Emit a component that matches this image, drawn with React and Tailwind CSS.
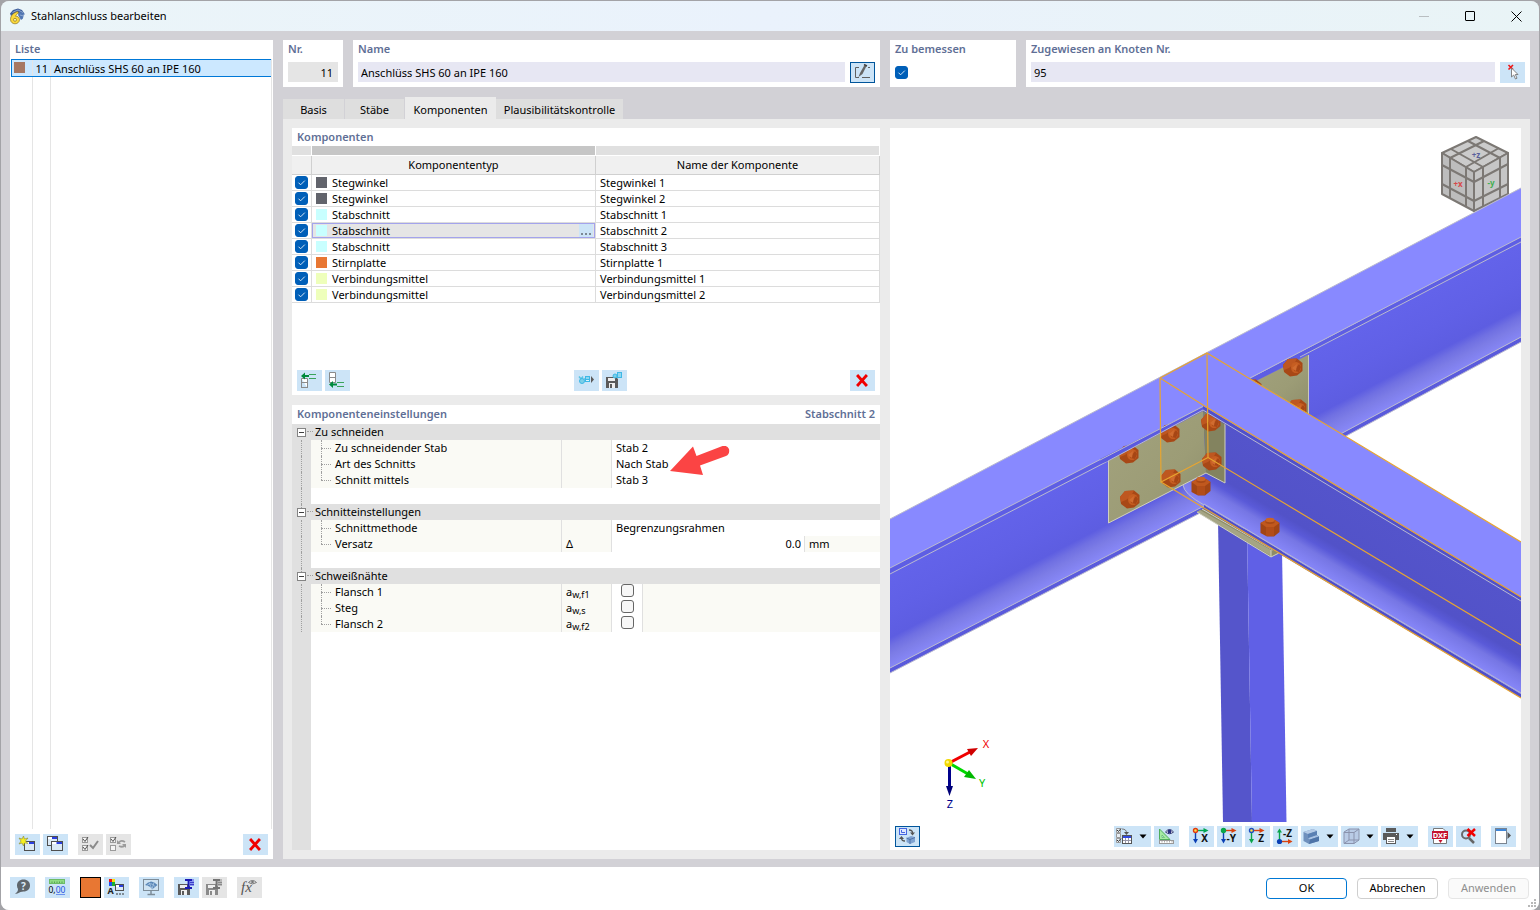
import { useState } from "react";
import clsx from "clsx";

const COMPONENTS = [
  { id: 1, type: "Stegwinkel", name: "Stegwinkel 1", color: "bg-[#62646c]" },
  { id: 2, type: "Stegwinkel", name: "Stegwinkel 2", color: "bg-[#62646c]" },
  { id: 3, type: "Stabschnitt", name: "Stabschnitt 1", color: "bg-[#c8ffff]" },
  { id: 4, type: "Stabschnitt", name: "Stabschnitt 2", color: "bg-[#c8ffff]" },
  { id: 5, type: "Stabschnitt", name: "Stabschnitt 3", color: "bg-[#c8ffff]" },
  { id: 6, type: "Stirnplatte", name: "Stirnplatte 1", color: "bg-[#e87733]" },
  { id: 7, type: "Verbindungsmittel", name: "Verbindungsmittel 1", color: "bg-[#eeffbb]" },
  { id: 8, type: "Verbindungsmittel", name: "Verbindungsmittel 2", color: "bg-[#eeffbb]" },
];

const SETTINGS = [
  {
    title: "Zu schneiden",
    rows: [
      { label: "Zu schneidender Stab", value: "Stab 2" },
      { label: "Art des Schnitts", value: "Nach Stab" },
      { label: "Schnitt mittels", value: "Stab 3" },
    ],
  },
  {
    title: "Schnitteinstellungen",
    rows: [
      { label: "Schnittmethode", value: "Begrenzungsrahmen" },
      { label: "Versatz", symbol: "Δ", number: "0.0", unit: "mm" },
    ],
  },
  {
    title: "Schweißnähte",
    rows: [
      { label: "Flansch 1", symbol: "a", sub: "w,f1", check: true },
      { label: "Steg", symbol: "a", sub: "w,s", check: true },
      { label: "Flansch 2", symbol: "a", sub: "w,f2", check: true },
    ],
  },
];

const TABS = [
  { name: "Basis", width: "w-[62px]" },
  { name: "Stäbe", width: "w-[60px]" },
  { name: "Komponenten", width: "w-[91px]" },
  { name: "Plausibilitätskontrolle", width: "w-[128px]" },
];

const Icon = ({ children }) => (
  <svg width="25" height="21" viewBox="0 0 25 21" className="shrink-0" aria-hidden="true">
    {children}
  </svg>
);

const ToolButton = ({ label, disabled, active, menu, children }) => (
  <button
    type="button"
    aria-label={label}
    disabled={disabled}
    className={clsx(
      "flex h-[21px] shrink-0 items-center overflow-hidden",
      menu ? "w-[37px]" : "w-[25px] justify-center",
      disabled ? "bg-[#e5e5e5]" : "bg-[#cce4f7]",
      active && "outline outline-1 -outline-offset-1 outline-[#00559b]"
    )}
  >
    <Icon>{children}</Icon>
    {menu && (
      <svg width="8" height="5" viewBox="0 0 8 5" className="shrink-0" aria-hidden="true">
        <path d="M0.5 0.5H7.5L4 4.5Z" fill="#000" />
      </svg>
    )}
  </button>
);

const Checkbox = ({ label, checked, onChange }) => (
  <label className="relative block size-[13px]">
    <input
      type="checkbox"
      aria-label={label}
      checked={checked}
      onChange={onChange}
      className="block size-[13px] appearance-none rounded-[3px] border border-[#666] bg-[#f7f7f7] checked:border-[#005fb8] checked:bg-[#005fb8]"
    />
    {checked && (
      <svg width="13" height="13" viewBox="0 0 13 13" className="pointer-events-none absolute inset-0">
        <path d="M3.5 6.7L5.6 8.8L9.8 4.6" fill="none" stroke="#d6e6f5" />
      </svg>
    )}
  </label>
);

const Heading = ({ children }) => (
  <h2 className="text-[11px] leading-[18px] font-semibold text-[#5f6f96]">{children}</h2>
);

/* ---------- icon drawings, all on a 25 x 21 canvas ---------- */

const RedCross = () => (
  <path d="M8 6L16 15M16 6L8 15" stroke="#f00000" strokeWidth="2.8" strokeLinecap="square" />
);

const MiniWindow = ({ x, y, w = 10, h = 9 }) => (
  <g>
    <rect x={x + 0.5} y={y + 0.5} width={w} height={h} fill="#dbe9f5" stroke="#4f4f4f" />
    <rect x={x + 1} y={y + 1} width={w - 1} height="2" fill="#fff" />
    <rect x={x + w / 2} y={y + 1} width={w / 2} height="2" fill="#2a3fe0" />
  </g>
);

const CheckBoxes = ({ both }) => (
  <g fill="none">
    <rect x="4.5" y="3.5" width="5" height="5" fill="#f4f4f4" stroke="#9a9a9a" />
    <rect x="4.5" y="11.5" width="5" height="5" fill="#f4f4f4" stroke="#9a9a9a" />
    <path d="M5 5l2 2.500l3-4.500" stroke="#4f4f4f" />
    {both && <path d="M5 13l2 2.500l3-4.500" stroke="#4f4f4f" />}
  </g>
);

const Disk = ({ color }) => (
  <g>
    <path d="M4 7H14L16 9V18H4Z" fill={color} />
    <rect x="6" y="8" width="7" height="3" fill="#eee" />
    <rect x="7" y="13" width="6" height="5" fill="#eee" />
    <rect x="8" y="14" width="2" height="4" fill={color} />
  </g>
);

const AxisIcon = ({ dot, ring, right, down, text, flip }) => (
  <g strokeWidth="1.400" fill="none">
    {flip ? (
      <>
        <path d="M6.500 15V5" stroke={down} />
        <path d="M4 6.500L6.500 2.500L9 6.500Z" fill={down} />
        <path d="M6.500 15.500H16" stroke={right} />
        <path d="M15 13L19.500 15.500L15 18Z" fill={right} />
        <circle cx="6.500" cy="15.500" r="2.600" fill={dot} />
      </>
    ) : (
      <>
        <path d="M6.500 5V14" stroke={down} />
        <path d="M4 13L6.500 17.500L9 13Z" fill={down} />
        <path d="M6.500 4.500H16" stroke={right} />
        <path d="M14.500 2L19.500 4.500L14.500 7Z" fill={right} />
        <circle cx="6.500" cy="4.500" r="2" fill={dot} stroke={ring} />
      </>
    )}
    <text
      x={19}
      y={flip ? 11 : 16}
      fontSize="10"
      fontWeight="700"
      fill="#111"
      textAnchor="end"
      fontFamily="Noto Sans, sans-serif"
    >
      {text}
    </text>
  </g>
);

const AppLogo = () => (
  <svg width="17" height="17" viewBox="0 0 17 17" aria-hidden="true">
    <path d="M1 5.500L4 2L9 0.500L13 2L16 6.500L13 6L12 9L9 5L4 6.500L2 8Z" fill="#3f5f9c" />
    <path d="M10 4L15 5L14 10.500L12 12L9 7Z" fill="#5277b4" />
    <path d="M3.500 4.500L9 2L14 4.500M11 7L14.500 8" stroke="#8fa9d2" fill="none" />
    <path d="M8.500 3.500C4 5 1.500 8 1.500 11.500C1.500 14 3.500 15.800 6 15.800S10.500 14 10.500 11.600S8.500 8 6.500 8.200C7 7 7.800 6 9.500 5Z" fill="#fbd83a" stroke="#8a7420" strokeWidth="0.700" />
    <circle cx="6" cy="11.800" r="1.500" fill="#fff2a8" stroke="#8a7420" strokeWidth="0.700" />
  </svg>
);

const BeamTag = ({ dark, light }) => (
  <g>
    <rect x="14" y="2" width="6" height="7" fill={light} />
    <path d="M11 3H18M11 11H18M14.500 3V11" stroke={dark} strokeWidth="1.800" />
    <path d="M16 5.500H20M16 7.500H20" stroke={dark} strokeWidth="0.700" />
  </g>
);

/* ---------- 3D view ---------- */

const Bolt = ({ x, y }) => (
  <g transform={`translate(${x} ${y})`}>
    <path d="M-10 -2L-5 -8L4 -8.500L9.500 -4L9.500 4L4 8.500L-3 9.500L-9 5Z" fill="#a84816" />
    <path d="M-10 -2L-5 -8L4 -8.500L1 -3L-4 1L-9 3Z" fill="#be5720" />
    <ellipse cx="3" cy="0.500" rx="5" ry="5.500" fill="#c65e22" />
    <path d="M1 4L6 5L8 0L6 -3Z" fill="#a64615" />
    <path d="M-1 1L3 4L4 -3Z" fill="#d06c30" />
  </g>
);

const Nut = ({ x, y }) => (
  <g transform={`translate(${x} ${y})`}>
    <path d="M-9.500 -4L-4 -7L5 -7L9.500 -4V5L4 9.500H-3L-9.500 6Z" fill="#a24514" />
    <path d="M-9.500 -4L-4 -7L5 -7L9.500 -4L4 0L-4 0Z" fill="#c0581e" />
    <path d="M-4 0H4V9H-4Z" fill="#b24d19" />
    <path d="M-4.500 -7V-4Q0 -2 4.500 -4V-7Z" fill="#a84816" />
    <ellipse cx="0" cy="-7" rx="4.500" ry="2.200" fill="#c96427" />
  </g>
);

const NavigationCube = () => (
  <g stroke="#7c7874" strokeWidth="2" strokeLinejoin="round">
    <path d="M1476 137L1508 153L1474 172L1442 153Z" fill="#cbcbcb" />
    <path d="M1442 153L1474 172V211L1442 194Z" fill="#bdbdbd" />
    <path d="M1474 172L1508 153V194L1474 211Z" fill="#c6c6c6" />
    <g fill="none">
      <path d="M1468 141L1500 158V198M1451 149L1483 167V206" />
      <path d="M1484 141L1450 158V198M1499 148L1466 167V207" />
      <path d="M1442 165L1474 182L1508 164M1442 184L1474 201L1508 184" />
    </g>
    <g stroke="none" fontSize="8" fontWeight="700" fontFamily="Noto Sans, sans-serif" textAnchor="middle">
      <text x="1476" y="158" fill="#5b5f9c">+z</text>
      <text x="1458" y="187" fill="#d84a4a">+x</text>
      <text x="1491" y="186" fill="#3fae50">-y</text>
    </g>
  </g>
);

const AxisCross = () => (
  <g fontSize="11" fontFamily="Noto Sans, sans-serif" textAnchor="middle">
    <path d="M949 763L970 752" stroke="#f00000" strokeWidth="3" />
    <path d="M967 749L978 748L971 756Z" fill="#d00000" />
    <path d="M949 763L968 774" stroke="#00d800" strokeWidth="3" />
    <path d="M969 770L976 779L964 777Z" fill="#00b800" />
    <path d="M949.500 763V788" stroke="#00008c" strokeWidth="3" />
    <path d="M946 786H953L949.500 796Z" fill="#000078" />
    <circle cx="948.500" cy="763" r="4" fill="#f2d800" />
    <circle cx="947.500" cy="762" r="1.500" fill="#fff78a" />
    <text x="986" y="748" fill="#f00000">X</text>
    <text x="982" y="787" fill="#00c400">Y</text>
    <text x="950" y="808" fill="#00008c">Z</text>
  </g>
);

const JointView = () => (
  <svg
    viewBox="890 128 631 694"
    preserveAspectRatio="xMidYMid slice"
    className="min-h-0 w-full flex-1"
    role="img"
    aria-label="3D-Ansicht"
  >
    <defs>
      <linearGradient id="webA" gradientUnits="userSpaceOnUse" x1="890" y1="574" x2="928.600" y2="647.800">
        <stop offset="0" stopColor="#6363ea" />
        <stop offset="0.4" stopColor="#6060e6" />
        <stop offset="0.68" stopColor="#5d5de1" />
        <stop offset="0.77" stopColor="#7070e2" />
        <stop offset="0.86" stopColor="#7c7ce6" />
        <stop offset="1" stopColor="#8787f6" />
      </linearGradient>
      <linearGradient id="webB" gradientUnits="userSpaceOnUse" x1="1521" y1="600" x2="1479.600" y2="669.600">
        <stop offset="0" stopColor="#5454cb" />
        <stop offset="0.6" stopColor="#5252c8" />
        <stop offset="0.7" stopColor="#5a5ad8" />
        <stop offset="0.8" stopColor="#7676e4" />
        <stop offset="1" stopColor="#8888fa" />
      </linearGradient>
      <linearGradient id="plate" x1="0" y1="0" x2="1" y2="1">
        <stop offset="0" stopColor="#a3a37e" />
        <stop offset="0.6" stopColor="#9c9c76" />
        <stop offset="1" stopColor="#8d8d6b" />
      </linearGradient>
    </defs>

    <NavigationCube />

    {/* main beam */}
    <path d="M890 568L1203 406L1250 379L1521 237V337L1320 445L1204 507L890 668Z" fill="url(#webA)" />
    <path d="M1204 507L1320 445L1343 440L1300 520L1206 512Z" fill="#fff" />
    <path d="M890 668L1204 506V511L890 673Z" fill="#5a5adc" />
    <path d="M1320 445L1521 337V342L1320 450Z" fill="#5a5adc" />
    <path d="M890 668L1204 506M1320 445L1521 337M890 673L1204 511M1320 450L1521 342" stroke="#b9b9cf" fill="none" />
    <path d="M890 519L1207 352.500L1521 188V237L1250 378.500L1203 406.500L890 568Z" fill="#8889ff" />
    <path d="M890 568L1203 406.500V411L890 573Z M1250 378.500L1521 237V241L1250 384Z" fill="#5e5ee4" />
    <path d="M890 519L1207 352.500L1521 188M890 568L1203 406.500M890 574L1108 461M1250 378L1521 237M1300 357L1521 242" stroke="#b9b9cf" fill="none" />

    {/* far web angle */}
    <path d="M1252 383L1308 355V416L1240 400Z" fill="url(#plate)" />
    <path d="M1308.500 355V416" stroke="#c9c9bd" />
    <Bolt x={1293} y={367} />
    <Bolt x={1297} y={408} />
    <Bolt x={1252} y={388} />

    {/* column */}
    <path d="M1218 520L1247 530L1252 822H1223Z" fill="#5555cb" />
    <path d="M1247 530L1282 550L1286.500 822H1252Z" fill="#6060e6" />

    {/* end plate */}
    <path d="M1197 512L1205 508L1280 549V553L1271 557Z" fill="#8c8c68" />
    <path d="M1200 510L1271 550V556L1197 512Z" fill="#a5a584" />
    <path d="M1202 509L1273 550M1271 550V557M1197 512L1271 557L1279 553" stroke="#d2d2c2" fill="none" />

    {/* secondary beam */}
    <path d="M1183 485L1206 472L1204 407L1521 597V694L1204 505Q1184 495 1183 485Z" fill="url(#webB)" />
    <path d="M1183 485Q1184 494 1204 505" stroke="#b9b9cf" fill="none" />
    <path d="M1204 505L1521 694V698L1204 509Z" fill="#4e4ec8" />
    <path d="M1204 504L1521 693" stroke="#b9b9cf" fill="none" />

    {/* near web angle */}
    <path d="M1108 459L1203 408L1206 473L1109 523Z" fill="url(#plate)" />
    <path d="M1203 408L1225 423V483L1206 473Z" fill="#83835f" />
    <path d="M1108.500 459V523L1206 473L1225 483V422" stroke="#cfcfc0" fill="none" />
    <Bolt x={1129} y={454} />
    <Bolt x={1170} y={433} />
    <Bolt x={1211} y={422} />
    <Bolt x={1130} y={499} />
    <Bolt x={1171} y={478} />
    <Bolt x={1212} y={461} />
    <Nut x={1201} y={486} />
    <Nut x={1270} y={527} />

    {/* top flanges over the angle */}
    <path d="M1100 459L1203 406.500V411L1108 461L1100 464Z" fill="#5a5ae0" />
    <path d="M1160 378L1207 353L1521 542V597L1203 407Z" fill="#8889ff" />
    <path d="M1203 406L1521 597V601L1203 411Z" fill="#5050cc" />
    <path d="M1100 460L1203 406.500M1108 461L1203 410L1521 601" stroke="#b9b9cf" fill="none" />

    {/* bounding box of the cut */}
    <path
      d="M1160 378L1207 353L1521 542M1160 378L1203 405L1521 597M1207 353L1208 457.500L1521 645M1160 378L1161 482L1208 457.500M1161 482L1204 508L1521 698"
      stroke="#e8a530"
      strokeWidth="1.200"
      fill="none"
    />

    <AxisCross />
  </svg>
);

/* ---------- panels ---------- */

const TitleBar = () => (
  <header className="flex h-[30px] items-center bg-linear-to-r from-[#ebf5f8] via-[#eaf2fc] to-[#e9f4f6] pl-2">
    <AppLogo />
    <h1 className="ml-[5px] flex-1">Stahlanschluss bearbeiten</h1>
    <button type="button" aria-label="Minimieren" className="grid h-full w-[46px] place-items-center">
      <span className="h-px w-[10px] bg-[#b9bec1]" />
    </button>
    <button type="button" aria-label="Maximieren" className="grid h-full w-[46px] place-items-center">
      <span className="size-[10px] rounded-[1px] border border-black" />
    </button>
    <button type="button" aria-label="Schließen" className="grid h-full w-[46px] place-items-center">
      <svg width="11" height="11" viewBox="0 0 11 11">
        <path d="M0.500 0.500L10.500 10.500M10.500 0.500L0.500 10.500" stroke="#000" />
      </svg>
    </button>
  </header>
);

const ListPanel = () => (
  <aside className="flex w-[263px] shrink-0 flex-col bg-white">
    <div className="h-[19px] pl-[5px]">
      <Heading>Liste</Heading>
    </div>
    <div className="mr-[1px] ml-[1px] flex flex-1 flex-col border-r border-[#e5e5e5]">
      <button
        type="button"
        className="grid h-[18px] grid-cols-[21px_18px_1fr] items-stretch border border-r-0 border-[#0078d7] bg-[#cce8ff] text-left leading-[18px]"
      >
        <span className="border-r border-[#e5e5e5] pt-[2px] pl-[2px]">
          <span className="block size-[11px] bg-[#a67864]" />
        </span>
        <span className="h-4 border-r border-[#e5e5e5] pr-[2px] text-right">11</span>
        <span className="h-4 pl-[3px]">Anschlüss SHS 60 an IPE 160</span>
      </button>
      <div className="grid flex-1 grid-cols-[22px_18px_1fr]">
        <span className="border-r border-[#e5e5e5]" />
        <span className="border-r border-[#e5e5e5]" />
      </div>
    </div>
    <div className="mt-[5px] mb-1 flex gap-[3px] px-[5px]">
      <ToolButton label="Neu">
        <MiniWindow x={9} y={7} />
        <path d="M8.500 2L9.500 5L13 4L10.500 7L13 9.500L9.500 9L8.500 12L7 9L4 10L6 7L4 4L7 5Z" fill="#f5ee20" stroke="#8a8a3a" strokeWidth="0.600" />
      </ToolButton>
      <ToolButton label="Kopieren">
        <MiniWindow x={4} y={2} />
        <MiniWindow x={8} y={7} w={11} />
      </ToolButton>
      <span className="w-1" />
      <ToolButton label="Alle auswählen" disabled>
        <CheckBoxes both />
        <path d="M12 11L15 14L20 7" stroke="#8a8a8a" strokeWidth="2" fill="none" />
      </ToolButton>
      <ToolButton label="Auswahl umkehren" disabled>
        <CheckBoxes />
        <path d="M13 8.500Q15 5.500 19 8M19 11Q17 14 13 12" stroke="#9a9a9a" strokeWidth="1.800" fill="none" />
        <path d="M11 6V10H15ZM20 14V10H16Z" fill="#9a9a9a" />
      </ToolButton>
      <span className="flex-1" />
      <ToolButton label="Löschen">
        <RedCross />
      </ToolButton>
    </div>
  </aside>
);

const TopFields = () => {
  const [name, setName] = useState("Anschlüss SHS 60 an IPE 160");
  const [nodes, setNodes] = useState("95");
  const [design, setDesign] = useState(true);

  return (
    <div className="grid grid-cols-[597fr_640fr] gap-[10px]">
      <div className="flex gap-[10px]">
        <label className="block h-[47px] w-[60px] bg-white px-[5px]">
          <Heading>Nr.</Heading>
          <input readOnly value="11" className="mt-1 block h-5 w-full bg-[#e5e5e5] pr-[5px] text-right" />
        </label>
        <div className="h-[47px] flex-1 bg-white px-[5px]">
          <Heading>
            <label htmlFor="name">Name</label>
          </Heading>
          <div className="mt-1 flex gap-[5px]">
            <input
              id="name"
              value={name}
              onChange={(e) => setName(e.target.value)}
              className="h-5 min-w-0 flex-1 bg-[#e7e7f3] px-[3px]"
            />
            <ToolButton label="Name bearbeiten" active>
              <path d="M9 5.500H5.500V15.500H9M12 15.500H20M18 5.500H20" stroke="#606060" fill="none" />
              <path d="M8.500 15L10 11L14.500 3L16.500 4L12.500 12Z" fill="#666" />
              <path d="M14 2.500L17 4" stroke="#444" strokeWidth="1.500" />
            </ToolButton>
          </div>
        </div>
      </div>
      <div className="flex gap-[10px]">
        <div className="h-[47px] w-[126px] bg-white px-[5px]">
          <Heading>Zu bemessen</Heading>
          <div className="mt-2">
            <Checkbox label="Zu bemessen" checked={design} onChange={() => setDesign(!design)} />
          </div>
        </div>
        <div className="h-[47px] flex-1 bg-white px-[5px]">
          <Heading>
            <label htmlFor="nodes">Zugewiesen an Knoten Nr.</label>
          </Heading>
          <div className="mt-1 flex gap-[5px]">
            <input
              id="nodes"
              value={nodes}
              onChange={(e) => setNodes(e.target.value)}
              className="h-5 min-w-0 flex-1 bg-[#e7e7f3] px-[3px]"
            />
            <ToolButton label="Knoten wählen">
              <path d="M8.500 3L13 7.500M13 3L8.500 7.500" stroke="#f01818" strokeWidth="1.600" />
              <path d="M11.500 6V15L13.700 13L15.500 17L17 16.200L15.300 12.500H18Z" fill="#fff" stroke="#777" strokeWidth="0.900" />
            </ToolButton>
          </div>
        </div>
      </div>
    </div>
  );
};

const ComponentsPanel = () => {
  const [selected, setSelected] = useState(4);
  const [disabledIds, setDisabledIds] = useState([]);

  const toggle = (id) => {
    setDisabledIds((ids) => (ids.includes(id) ? ids.filter((i) => i !== id) : [...ids, id]));
  };

  return (
    <section className="flex min-h-[267px] flex-col bg-white">
      <div className="pl-[5px]">
        <Heading>Komponenten</Heading>
      </div>
      <table className="w-full table-fixed border-separate border-spacing-0">
        <colgroup>
          <col className="w-5" />
          <col />
          <col />
        </colgroup>
        <thead>
          <tr className="h-[10px]">
            <td className="border-r border-b border-white bg-[#e0e0e0] p-0" />
            <td className="border-r border-b border-white bg-[#c6c6c6] p-0" />
            <td className="border-r border-b border-white bg-[#e0e0e0] p-0" />
          </tr>
          <tr className="h-[19px] bg-[#f0f0f0]">
            <th className="border-r border-b border-[#d0d0d0] p-0" />
            <th className="border-r border-b border-[#d0d0d0] p-0 leading-[18px] font-normal">Komponententyp</th>
            <th className="border-r border-b border-[#d0d0d0] p-0 leading-[18px] font-normal">Name der Komponente</th>
          </tr>
        </thead>
        <tbody>
          {COMPONENTS.map((item) => (
            <tr key={item.id} className="h-4" onClick={() => setSelected(item.id)}>
              <td className="border-r border-b border-[#dcdcdc] p-0 pl-[3px]">
                <Checkbox
                  label={item.name}
                  checked={!disabledIds.includes(item.id)}
                  onChange={() => toggle(item.id)}
                />
              </td>
              <td className="border-r border-b border-[#dcdcdc] p-0">
                <div
                  className={clsx(
                    "flex h-[15px] items-center pl-1",
                    selected === item.id && "bg-[#e5e5e5] outline outline-1 -outline-offset-1 outline-[#a3a3ec]"
                  )}
                >
                  <span className={clsx("size-[11px]", item.color)} />
                  <span className="ml-[5px] flex-1 leading-[15px]">{item.type}</span>
                  {selected === item.id && (
                    <button
                      type="button"
                      aria-label="Typ wählen"
                      className="mr-[2px] flex h-[13px] w-[14px] items-end justify-center gap-[2px] bg-[#cce4f7] pb-[2px]"
                    >
                      <span className="size-[2px] bg-[#7c8894]" />
                      <span className="size-[2px] bg-[#7c8894]" />
                      <span className="size-[2px] bg-[#7c8894]" />
                    </button>
                  )}
                </div>
              </td>
              <td className="border-r border-b border-[#dcdcdc] p-0 pl-1 leading-[15px]">{item.name}</td>
            </tr>
          ))}
        </tbody>
      </table>
      <div className="mt-auto mb-1 flex justify-between px-[5px]">
        <div className="flex gap-[3px]">
          <ToolButton label="Davor einfügen">
            <path d="M4.500 8.500H10.500V18M4.500 8.500V18M4.500 12.500H10.500M4.500 17.500H10.500" fill="#fff" stroke="#8a8a8a" />
            <path d="M12 4.500H19M12 8.500H19" stroke="#3aa45a" />
            <path d="M4 6L8 2.500V5H12V7H8V9.500Z" fill="#008a3c" />
          </ToolButton>
          <ToolButton label="Danach einfügen">
            <path d="M4.500 2.500H10.500V12.500H4.500ZM4.500 7.500H10.500" fill="#fff" stroke="#8a8a8a" />
            <path d="M12 12.500H19M12 16.500H19" stroke="#3aa45a" />
            <path d="M4 14.500L8 11V13.500H12V15.500H8V18Z" fill="#008a3c" />
          </ToolButton>
        </div>
        <div className="flex gap-[3px]">
          <ToolButton label="Aus Bibliothek">
            <path d="M5 6.500L7 9L9 6.500M9 10L11 8.500" stroke="#5ac4e4" strokeWidth="1.500" fill="none" />
            <circle cx="8" cy="11" r="2.500" fill="#7ccfe8" stroke="#3db8e6" />
            <rect x="11" y="6" width="5" height="6" fill="#3db8e6" />
            <path d="M12 8H15M12 10.500H15" stroke="#dff4fb" />
            <path d="M17 6L20 9.500L17 13Z" fill="#5a5a5a" />
          </ToolButton>
          <ToolButton label="In Bibliothek speichern">
            <Disk color="#5a5a5a" />
            <circle cx="13" cy="6" r="2" fill="#7ccfe8" stroke="#3db8e6" />
            <rect x="15" y="2" width="5" height="6" fill="#3db8e6" />
            <path d="M16 4H19M16 6H19" stroke="#dff4fb" />
          </ToolButton>
        </div>
        <ToolButton label="Komponente löschen">
          <RedCross />
        </ToolButton>
      </div>
    </section>
  );
};

const SettingRow = ({ row, last }) => {
  const [checked, setChecked] = useState(false);
  const [number, setNumber] = useState(row.number);

  return (
    <tr className="h-4 leading-[16px]">
      <td className="relative bg-[#e0e0e0] p-0">
        <span className="absolute top-0 left-[9px] h-full border-l border-dotted border-[#a0a0a0]" />
      </td>
      <td className="relative border-r border-[#e0e0e0] bg-[#fafaf5] p-0 pl-6">
        <span
          className={clsx("absolute top-0 left-[10px] border-l border-dotted border-[#a0a0a0]", last ? "h-2" : "h-full")}
        />
        <span className="absolute top-2 left-[10px] w-[10px] border-t border-dotted border-[#a0a0a0]" />
        {row.label}
      </td>
      <td className="border-r border-[#e0e0e0] bg-[#fafaf5] p-0 pl-1">
        <div className="h-4">
          {row.symbol}
          {row.sub && <span className="relative top-[2px] text-[9px] leading-none">{row.sub}</span>}
        </div>
      </td>
      <td className="p-0">
        {row.check ? (
          <div className="flex h-4">
            <span className="flex w-[31px] justify-center border-r border-[#e0e0e0]">
              <Checkbox label={row.label} checked={checked} onChange={() => setChecked(!checked)} />
            </span>
            <span className="flex-1 bg-[#fafaf5]" />
          </div>
        ) : row.unit ? (
          <div className="flex h-4">
            <input
              aria-label={row.label}
              value={number}
              onChange={(e) => setNumber(e.target.value)}
              className="h-4 min-w-0 flex-1 pr-[3px] text-right"
            />
            <span className="w-[76px] border-l border-[#e0e0e0] bg-[#fafaf5] pl-1">{row.unit}</span>
          </div>
        ) : (
          <span className="pl-1">{row.value}</span>
        )}
      </td>
    </tr>
  );
};

const SettingsPanel = () => (
  <section className="relative flex flex-1 flex-col bg-white">
    <div className="flex justify-between px-[5px] pb-[1px]">
      <Heading>Komponenteneinstellungen</Heading>
      <Heading>Stabschnitt 2</Heading>
    </div>
    <table className="w-full table-fixed border-separate border-spacing-0">
      <colgroup>
        <col className="w-[19px]" />
        <col className="w-[251px]" />
        <col className="w-[50px]" />
        <col />
      </colgroup>
      {SETTINGS.map((group, index) => (
        <tbody key={group.title}>
          <tr className="h-4 bg-[#e0e0e0] leading-[16px]">
            <td className="relative p-0 pl-[5px]">
              {index > 0 && (
                <span className="absolute top-0 left-[9px] h-1 border-l border-dotted border-[#a0a0a0]" />
              )}
              <button
                type="button"
                aria-label={`${group.title} einklappen`}
                className="grid size-[9px] place-items-center border border-[#848484] bg-white"
              >
                <span className="h-px w-[5px] bg-[#404040]" />
              </button>
            </td>
            <td colSpan={3} className="relative p-0 pl-1">
              <span className="absolute top-[7px] left-[-4px] w-[6px] border-t border-dotted border-[#a0a0a0]" />
              {group.title}
            </td>
          </tr>
          {group.rows.map((row, i) => (
            <SettingRow key={row.label} row={row} last={i === group.rows.length - 1} />
          ))}
          {index < SETTINGS.length - 1 && (
            <tr className="h-4">
              <td className="relative bg-[#e0e0e0] p-0">
                <span className="absolute top-0 left-[9px] h-full border-l border-dotted border-[#a0a0a0]" />
              </td>
              <td colSpan={3} className="p-0" />
            </tr>
          )}
        </tbody>
      ))}
    </table>
    <div className="w-[19px] flex-1 bg-[#e0e0e0]" />
    {/* pointer to the cut type */}
    <svg width="60" height="30" viewBox="670 446 60 30" className="pointer-events-none absolute top-[41px] left-[378px]">
      <path d="M670 471L693 446.500L696.500 456L722.500 446Q727 445 729 449Q730 454 726 456L700 465.500L703 475Z" fill="#fb4444" />
    </svg>
  </section>
);

const ViewToolbar = () => (
  <div className="flex h-7 items-start gap-[3px] px-[5px] pt-1">
    <ToolButton label="Ansicht wechseln" active>
      <rect x="4.500" y="2.500" width="7" height="6" fill="#dfe8ff" stroke="#4466e0" />
      <path d="M6.500 4V6.500H10" stroke="#4466e0" fill="none" />
      <path d="M14 4Q17.500 4 17.500 7M10 15Q6.500 15 6.500 12" stroke="#555" fill="none" strokeWidth="1.300" />
      <path d="M15 6.500H20L17.500 9.500ZM4 13H9L6.500 10Z" fill="#555" />
      <path d="M11.500 12L16 10L20 11V16L15 18L11.500 16Z" fill="#7fa3d2" />
      <path d="M11.500 12L15 13.500L20 11.500M15 13.500V18" stroke="#3f6298" strokeWidth="0.700" fill="none" />
    </ToolButton>
    <span className="flex-1" />
    <ToolButton label="Anzeigeoptionen" menu>
      <path d="M2.500 2.500H6.500V6.500H2.500ZM2.500 7.500H6.500V11.500H2.500ZM2.500 12.500H6.500V16.500H2.500Z" fill="#e8eef4" stroke="#9a9a9a" />
      <path d="M3 4L4.500 5.500L7 2.500M3 14L4.500 15.500L7 12.500" stroke="#333" fill="none" />
      <path d="M8 3Q12.500 3 12.500 7" stroke="#777" fill="none" />
      <path d="M10 6H15L12.500 9Z" fill="#555" />
      <rect x="8.500" y="9.500" width="9" height="8" fill="#fff" stroke="#555" />
      <rect x="9" y="10" width="8" height="2" fill="#3048e0" />
      <path d="M9 14.500H17M11.500 12V17M14.500 12V17" stroke="#99a" />
    </ToolButton>
    <ToolButton label="Bemaßung">
      <path d="M5.500 3V13.500H16Z" fill="#a6eca4" stroke="#4fae5c" />
      <path d="M8 9V11.500H10.500Z" fill="#cce4f7" stroke="#4fae5c" strokeWidth="0.600" />
      <rect x="5.500" y="14.500" width="14" height="3" fill="#fff" stroke="#999" />
      <path d="M8 15V16.500M10.500 15V16.500M13 15V16.500M15.500 15V16.500M18 15V16.500" stroke="#888" strokeWidth="0.700" />
      <path d="M11.500 6Q15.500 1 19.500 6Q15.500 9.500 11.500 6Z" fill="#fff" stroke="#333a70" />
      <circle cx="15.500" cy="5.500" r="2" fill="#283080" />
    </ToolButton>
    <span className="w-1" />
    <ToolButton label="Ansicht X">
      <AxisIcon dot="#ffe04a" ring="#e03a10" right="#00a651" down="#0a3fb4" text="X" />
    </ToolButton>
    <ToolButton label="Ansicht -Y">
      <AxisIcon dot="#0aa54a" ring="#0aa54a" right="#d9420f" down="#0a3fb4" text="-Y" />
    </ToolButton>
    <ToolButton label="Ansicht Z">
      <AxisIcon dot="#ffe04a" ring="#1f4fc0" right="#d9420f" down="#0aa54a" text="Z" />
    </ToolButton>
    <ToolButton label="Ansicht -Z">
      <AxisIcon flip dot="#0a3fb4" right="#d9420f" down="#0aa54a" text="-Z" />
    </ToolButton>
    <ToolButton label="Darstellung" menu>
      <path d="M2.500 6L12 3L16 5V9L18 10.500V15L8 18L2.500 15Z" fill="#6f90bd" />
      <path d="M2.500 6L12 3L16 5L7 8Z" fill="#b4cae6" />
      <path d="M7 12L15 9L18 10.500L9 13.500Z" fill="#a9c3e4" />
      <path d="M9 13.500L18 10.500V15L8 18Z" fill="#4e74a8" />
      <path d="M7 8L16 5V9L7 12Z" fill="#5a80b3" />
    </ToolButton>
    <ToolButton label="Transparenz" menu>
      <path d="M3 6L8 3H18V14L13 17.500H3Z" fill="#b9cbe6" stroke="#8a93ad" />
      <path d="M3 6.500H13V17.500M13 6.500L18 3M8 3V14H18M8 14L3 17.500" stroke="#8a93ad" fill="none" />
    </ToolButton>
    <ToolButton label="Drucken" menu>
      <rect x="5" y="2" width="10" height="4" fill="#5a5a5a" />
      <rect x="2" y="7" width="16" height="7" fill="#5a5a5a" />
      <rect x="5.500" y="10.500" width="9" height="7" fill="#fff" stroke="#5a5a5a" />
      <path d="M7 13.500H13M7 15.500H13" stroke="#888" />
      <rect x="15" y="8" width="1" height="1" fill="#fff" />
    </ToolButton>
    <span className="w-1" />
    <ToolButton label="DXF-Export">
      <path d="M5.500 2.500H15L18.500 6V17.500H5.500Z" fill="#fff" stroke="#777" />
      <rect x="4" y="5" width="16" height="8" fill="#c4122f" />
      <text x="12" y="12" fontSize="7.500" fontWeight="700" fill="#fff" textAnchor="middle" fontFamily="Noto Sans, sans-serif">
        DXF
      </text>
      <path d="M10.500 14H14.500L12.500 17Z" fill="#c4122f" />
    </ToolButton>
    <ToolButton label="Auswahl aufheben">
      <circle cx="10" cy="8.500" r="4" fill="none" stroke="#6a6a6a" strokeWidth="2" />
      <path d="M13 12L18 17" stroke="#666" strokeWidth="2.500" />
      <path d="M11.500 3L19 10M19 3L11.500 10" stroke="#f00000" strokeWidth="2.500" />
    </ToolButton>
    <span className="w-1" />
    <ToolButton label="Seitenleiste">
      <rect x="4.500" y="2.500" width="11" height="15" fill="#fff" stroke="#7a8490" />
      <rect x="5" y="3" width="10" height="2" fill="#3f86d8" />
      <path d="M16.500 6L20 9.500L16.500 13Z" fill="#555" />
    </ToolButton>
  </div>
);

const Footer = () => (
  <footer className="relative flex items-start gap-[10px] bg-white pt-[10px] pr-[10px] pb-[11px] pl-[9px]">
    <ToolButton label="Hilfe">
      <path d="M13.500 2.500C17.500 2.500 20 5 20 8.500S17.500 14.500 13.500 14.500Q10 14.500 8.500 16Q7 17 5 16.500Q8 15 8 12Q7 10.500 7 8.500C7 5 9.500 2.500 13.500 2.500Z" fill="#5f666c" />
      <text x="13.500" y="12.500" fontSize="10" fontWeight="700" fill="#dcebf7" textAnchor="middle" fontFamily="Noto Sans, sans-serif">
        ?
      </text>
    </ToolButton>
    <ToolButton label="Einheiten und Dezimalstellen">
      <rect x="4.500" y="2.500" width="15" height="4" fill="#8fdc84" stroke="#6cbc66" />
      <path d="M7 4.500V6M9.500 4.500V6M12 4.500V6M14.500 4.500V6M17 4.500V6" stroke="#3f8a40" strokeWidth="0.700" />
      <text x="3.500" y="16" fontSize="8.500" fill="#000" fontFamily="Noto Sans, sans-serif">
        0,<tspan fill="#1e50e0">00</tspan>
      </text>
      <path d="M11 17.500H20" stroke="#6a90ee" />
    </ToolButton>
    <div className="flex gap-[3px]">
      <button type="button" aria-label="Farbe" className="size-[21px] border border-black bg-[#e87733]" />
      <ToolButton label="Darstellungsart">
        <rect x="5" y="2" width="3" height="3" fill="#f01010" />
        <rect x="8" y="2" width="3" height="3" fill="#f5e010" />
        <rect x="5" y="5" width="3" height="4" fill="#2050f0" />
        <rect x="8" y="5" width="3" height="4" fill="#18b030" />
        <text x="3.500" y="17" fontSize="9" fontWeight="700" fill="#222" fontFamily="Noto Sans, sans-serif">
          A
        </text>
        <path d="M12 17H20" stroke="#333" strokeDasharray="2 1" />
        <MiniWindow x={11} y={7} w={8} h={6} />
      </ToolButton>
    </div>
    <ToolButton label="Ansicht">
      <rect x="4.500" y="2.500" width="15" height="11" fill="#cfe3f2" stroke="#7d8c98" />
      <path d="M6 8Q12 1 18.500 8L13 12.500Q12 9 6 8Z" fill="#5a87b8" />
      <path d="M8 8.500Q12 4.500 16 9.500M13 12L10 5.500M13 12L15 5.500" stroke="#b5d0e8" strokeWidth="0.700" fill="none" />
      <path d="M12 14V17M8.500 17.500H16" stroke="#7d8c98" strokeWidth="1.500" />
    </ToolButton>
    <div className="flex gap-[3px]">
      <ToolButton label="Speichern">
        <Disk color="#5a5a5a" />
        <BeamTag dark="#1a1ab4" light="#8a96f0" />
      </ToolButton>
      <ToolButton label="Laden" disabled>
        <Disk color="#8a8a8a" />
        <BeamTag dark="#747474" light="#b8b8b8" />
      </ToolButton>
    </div>
    <ToolButton label="Formel" disabled>
      <text x="4" y="15" fontSize="15" fontStyle="italic" fill="#555" fontFamily="Liberation Serif, serif">
        fx
      </text>
      <path d="M11.500 5.500Q15.500 1.500 19.500 5.500Q15.500 8.500 11.500 5.500Z" fill="#e5e5e5" stroke="#777" />
      <circle cx="15.500" cy="5" r="1.300" fill="#777" />
    </ToolButton>
    <div className="flex flex-1 justify-end gap-[10px] pt-px">
      <button type="button" className="h-[21px] w-[81px] rounded-[4px] border border-[#0078d4] bg-white">
        OK
      </button>
      <button type="button" className="h-[21px] w-[81px] rounded-[4px] border border-[#cfcfcf] bg-white">
        Abbrechen
      </button>
      <button
        type="button"
        disabled
        className="h-[21px] w-[81px] rounded-[4px] border border-[#e6e6e6] bg-[#fafafa] text-[#8f8f8f]"
      >
        Anwenden
      </button>
    </div>
    {/* resize grip */}
    <svg width="8" height="8" viewBox="0 0 8 8" className="absolute right-[3px] bottom-[3px]" aria-hidden="true">
      <path d="M0 6h2v2H0ZM3 6h2v2H3ZM6 6h2v2H6ZM3 3h2v2H3ZM6 3h2v2H6ZM6 0h2v2H6Z" fill="#b8b8b8" />
    </svg>
  </footer>
);

export default function App() {
  const [tab, setTab] = useState("Komponenten");

  return (
    <div className="min-h-screen bg-[#a3a3a7] p-px font-['Noto_Sans',sans-serif] text-[11px] text-black">
      <div className="flex min-h-[calc(100vh-2px)] flex-col overflow-hidden rounded-[8px] bg-[#d2d1d6]">
        <TitleBar />
        <main className="flex flex-1 gap-[10px] px-[9px] pt-[9px] pb-2">
          <ListPanel />
          <div className="flex min-w-0 flex-1 flex-col">
            <TopFields />
            <div role="tablist" className="mt-[10px] flex h-[22px] items-end">
              {TABS.map(({ name, width }) => (
                <button
                  key={name}
                  type="button"
                  role="tab"
                  aria-selected={tab === name}
                  onClick={() => setTab(name)}
                  className={clsx(
                    "whitespace-nowrap",
                    width,
                    tab === name ? "h-[22px] bg-[#ebebeb] pt-1" : "h-5 border-r border-[#d2d1d6] bg-[#dedede] pt-[2px]"
                  )}
                >
                  {name}
                </button>
              ))}
            </div>
            <div className="grid flex-1 grid-cols-[588fr_631fr] gap-[10px] bg-[#ebebeb] p-[9px]">
              <div className="flex min-w-0 flex-col gap-[10px]">
                <ComponentsPanel />
                <SettingsPanel />
              </div>
              <div className="flex min-w-0 flex-col bg-white">
                <JointView />
                <ViewToolbar />
              </div>
            </div>
          </div>
        </main>
        <Footer />
      </div>
    </div>
  );
}
